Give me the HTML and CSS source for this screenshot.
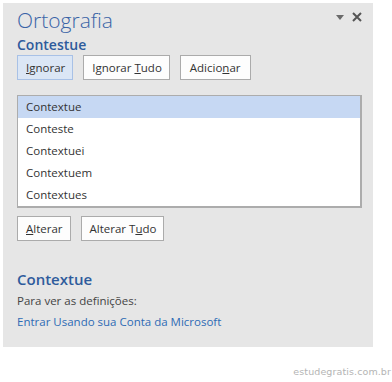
FILE: index.html
```html
<!DOCTYPE html>
<html lang="pt-BR">
<head>
    <meta charset="UTF-8">
    <title>Ortografia</title>
    <link rel="stylesheet" href="styles.css">
</head>
<body>
    <div class="pane">
        <!-- cabeçalho do painel -->
        <div class="pane-head">
            <h1 class="pane-title">Ortografia</h1>
            <div class="pane-tools">
                <svg width="8" height="5" viewBox="0 0 8 5"><path d="M0 0h8L4 5z" fill="#6a6a6a"/></svg>
                <svg width="10" height="10" viewBox="0 0 10 10"><path d="M1 1l8 8M9 1L1 9" stroke="#555" stroke-width="2"/></svg>
            </div>
        </div>
        <h2 class="word">Contestue</h2>

        <div class="btn-row">
            <button class="btn btn-active"><u>I</u>gnorar</button>
            <button class="btn">Ignorar <u>T</u>udo</button>
            <button class="btn btn-wide">Adicio<u>n</u>ar</button>
        </div>

        <!-- sugestões -->
        <ul class="suggestions">
            <li class="selected">Contextue</li>
            <li>Conteste</li>
            <li>Contextuei</li>
            <li>Contextuem</li>
            <li>Contextues</li>
        </ul>

        <div class="btn-row">
            <button class="btn"><u>A</u>lterar</button>
            <button class="btn">Alterar T<u>u</u>do</button>
        </div>

        <h2 class="word word-def">Contextue</h2>
        <p class="note">Para ver as definições:</p>
        <a class="link" href="#">Entrar Usando sua Conta da Microsoft</a>
    </div>
    <div class="watermark">estudegratis.com.br</div>
</body>
</html>
```

FILE: styles.css
```css
* {
    margin: 0;
    padding: 0;
    box-sizing: border-box;
}

body {
    background: #fff;
    font-family: 'Open Sans', sans-serif;
    font-size: 11.5px;
    color: #444;
}

/* painel lateral */
.pane {
    margin: 3px 0 0 3px;
    width: 370px;
    height: 344px;
    background: #e6e6e6;
    padding: 0 11px 0 14px;
}

.pane-head {
    display: flex;
    justify-content: space-between;
    align-items: flex-start;
}

.pane-title {
    font-size: 21px;
    font-weight: 300;
    color: #3a64a6;
    line-height: 30px;
    padding-top: 2px;
}

.pane-tools {
    display: flex;
    align-items: center;
    gap: 8px;
    padding-top: 9px;
}

.word {
    font-size: 14px;
    font-weight: 600;
    color: #2e5b9c;
    line-height: 19px;
}

.btn-row {
    display: flex;
    gap: 10px;
    margin-top: 1px;
}

.btn {
    height: 25px;
    padding: 0 7px 0 8px;
    background: #fdfdfd;
    border: 1px solid #ababab;
    font-family: inherit;
    font-size: 11.5px;
    color: #333;
}

.btn-wide {
    padding: 0 9px;
}

.btn-active {
    background: #dbe6f5;
    border-color: #a8c1e6;
}

.suggestions {
    list-style: none;
    margin: 15px 0 8px;
    background: #fff;
    border: 1px solid #acacac;
    border-right-width: 2px;
    border-bottom-width: 2px;
}

.suggestions li {
    height: 22px;
    line-height: 22px;
    padding-left: 8px;
    color: #333;
}

.suggestions .selected {
    background: #c6d8f3;
}

.word-def {
    margin-top: 29px;
    font-size: 15px;
}

.note {
    margin-top: 4px;
    line-height: 16px;
}

.link {
    display: block;
    margin-top: 5px;
    color: #2e6bb5;
    text-decoration: none;
}

.watermark {
    text-align: right;
    padding: 19px 1px 0 0;
    font-family: 'DejaVu Sans', sans-serif;
    font-size: 9.5px;
    letter-spacing: 0.1px;
    color: #b4b4b4;
}
```
